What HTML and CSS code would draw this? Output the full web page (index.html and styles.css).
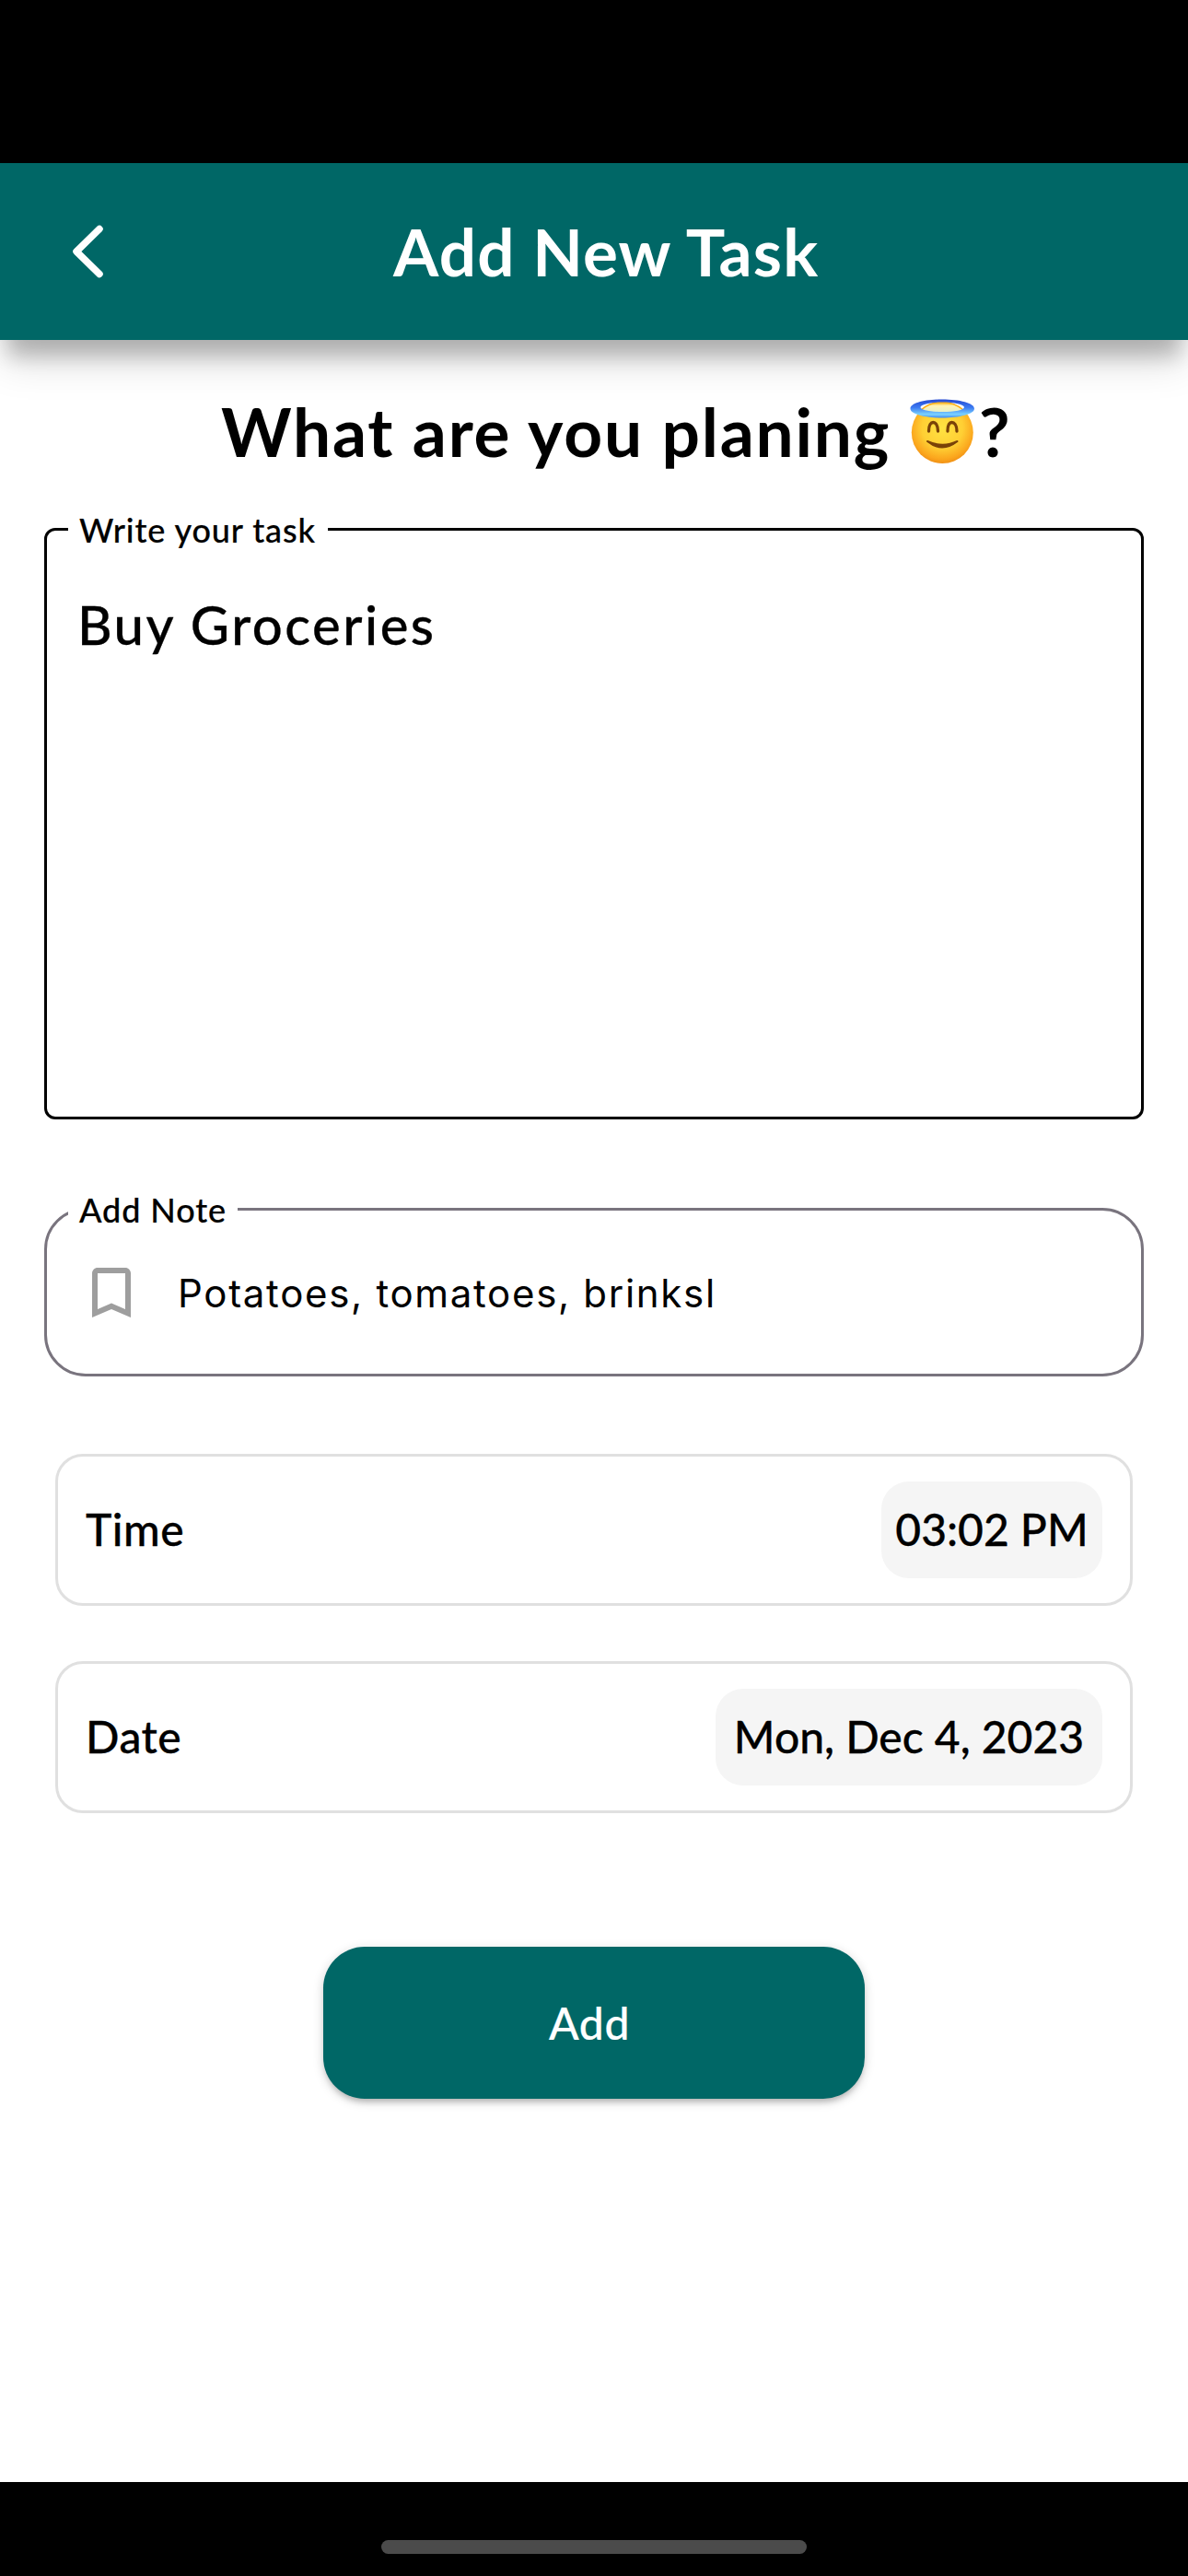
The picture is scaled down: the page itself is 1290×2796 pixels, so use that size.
FILE: index.html
```html
<!DOCTYPE html>
<html lang="en">
<head>
<meta charset="utf-8">
<title>Add New Task</title>
<link rel="stylesheet" href="styles.css">
</head>
<body>
<div class="screen">
  <header class="appbar">
    <svg class="back" width="40" height="64" viewBox="0 0 40 64" aria-label="Back"><path d="M33 7.500L8 32L33 56.500" fill="none" stroke="#fff" stroke-width="7.500" stroke-linecap="round" stroke-linejoin="round"/></svg>
    <h1 class="title">Add New Task</h1>
  </header>
  <main class="content">
    <h2 class="question">
      <span class="question-text">What are you planing</span>
      <svg class="emoji" width="72" height="72" viewBox="0 0 72 72" role="img" aria-label="Smiling face with halo">
        <defs>
          <radialGradient id="face" cx=".5" cy=".42" r=".6"><stop offset="0" stop-color="#ffe342"/><stop offset=".55" stop-color="#ffcf34"/><stop offset=".85" stop-color="#fba61d"/><stop offset="1" stop-color="#ee8b13"/></radialGradient>
          <linearGradient id="crown" x1="0" y1="0" x2="0" y2="1"><stop offset="0" stop-color="#ffad0a"/><stop offset=".3" stop-color="#fff3b5"/><stop offset="1" stop-color="#dcefcf"/></linearGradient>
          <linearGradient id="halo" x1="0" y1="0" x2="0" y2="1"><stop offset="0" stop-color="#2449d2"/><stop offset=".45" stop-color="#3d7bf2"/><stop offset=".82" stop-color="#7cd4ff"/><stop offset="1" stop-color="#3f86ed"/></linearGradient>
        </defs>
        <circle cx="36.300" cy="37.500" r="33.500" fill="url(#face)"/>
        <path d="M13 13Q23 4.500 36 4.500T59 13L52 18H20Z" fill="url(#crown)" stroke="#ffad12" stroke-width="1.500"/>
        <path fill-rule="evenodd" d="M1.500 11.500C1.500 5.500 17 1.500 36 1.500S71 5.500 71 11.500S55 21.500 36 21.500S1.500 17.500 1.500 11.500ZM12.500 10C12.500 13 22 15 36 15S60 13 60 10S49 4.500 36 4.500S12.500 7 12.500 10Z" fill="url(#halo)"/>
        <path d="M21.500 36C21.500 29 24 26.500 26.300 26.500S31.500 29 31.500 36M42 36C42 29 44 26.500 46.500 26.500S52 29 52 36" fill="none" stroke="#7a4208" stroke-width="3.300" stroke-linecap="round"/>
        <path d="M20 47Q36 60 52.500 47Q37 54.500 20 47Z" fill="#7a4208" stroke="#7a4208" stroke-width="2" stroke-linejoin="round"/>
      </svg>
      <span class="question-mark">?</span>
    </h2>
    <fieldset class="field task-field">
      <legend class="label label-task">Write your task</legend>
      <p class="task-value">Buy Groceries</p>
    </fieldset>
    <fieldset class="field note-field">
      <legend class="label label-note">Add Note</legend>
      <div class="note-row">
        <svg class="bookmark" width="72" height="72" viewBox="0 0 24 24"><path fill="#9e9e9e" d="M17 3H7c-1.100 0-1.990.9-1.990 2L5 21l7-3 7 3V5c0-1.100-.9-2-2-2zm0 15l-5-2.180L7 18V5h10v13z"/></svg>
        <span class="note-value">Potatoes, tomatoes, brinksl</span>
      </div>
    </fieldset>
    <section class="picker">
      <span class="picker-name">Time</span>
      <span class="pill pill-time">03:02 PM</span>
    </section>
    <section class="picker">
      <span class="picker-name">Date</span>
      <span class="pill pill-date">Mon, Dec 4, 2023</span>
    </section>
    <button class="add" type="button">Add</button>
  </main>
  <footer class="homebar"><span class="handle"></span></footer>
</div>
</body>
</html>
```
FILE: styles.css
```css
* { box-sizing: border-box; margin: 0; padding: 0; }
body { background: #fff; color: #000; font-family: Lato, "Open Sans", sans-serif; }
.screen { width: 1290px; height: 2796px; padding-top: 177px; display: flex; flex-direction: column; overflow: hidden;
  background: linear-gradient(#000 177px, #fff 177px); }
.appbar { height: 192px; flex: none; display: flex; align-items: center; background: #006766; color: #fff; padding-left: 75px;
  box-shadow: 0 26px 20px -9px rgba(0,0,0,.2), 0 24px 42px -3px rgba(0,0,0,.17); }
.back { flex: none; margin-right: 312px; }
.title { font-size: 71px; line-height: 96px; font-weight: 700; letter-spacing: 1.2px; white-space: nowrap; }
.content { flex: 1; padding: 0 48px; display: flex; flex-direction: column; }
.question { display: flex; align-items: center; height: 90px; margin: 54px 0 41px 192px; font-size: 73px; line-height: 90px; font-weight: 700; white-space: nowrap; }
.question-text { width: 747px; letter-spacing: 1.8px; }
.question-mark { margin-left: 4px; }
.emoji { flex: none; }
.field { border: 3px solid #000; border-radius: 12px; padding: 0 23px; min-width: 0; }
.label { height: 41px; padding: 1px 0 0 12px; font-size: 36px; line-height: 41px; font-weight: 500; letter-spacing: .9px; white-space: nowrap; -webkit-text-stroke: .2px currentColor; }
.label-task { width: 282px; }
.label-note { width: 184px; }
.task-field { height: 661px; }
.task-value { font-size: 58px; line-height: 70px; font-weight: 500; letter-spacing: 2.5px; margin: 48px 0 0 10px; white-space: nowrap; -webkit-text-stroke: .3px currentColor; }
.note-field { height: 202px; margin-top: 77px; border-color: #79747e; border-radius: 45px; }
.note-row { display: flex; align-items: center; margin: 34px 0 0 11px; height: 72px; }
.note-value { font: 400 42px/72px Inter, sans-serif; letter-spacing: 1.7px; margin-left: 36px; padding-top: 2px; white-space: nowrap; }
.picker { height: 165px; margin: 84px 12px 0; border: 3px solid #e0e0e0; border-radius: 30px; padding: 0 30px; display: flex; justify-content: space-between; align-items: center; font-size: 48px; line-height: 60px; font-weight: 500; -webkit-text-stroke: .3px currentColor; }
.picker + .picker { margin-top: 60px; }
.picker-name { letter-spacing: .5px; padding-bottom: 1px; }
.pill { height: 105px; padding-bottom: 1px; border-radius: 30px; background: #f5f5f5; display: flex; align-items: center; justify-content: center; white-space: nowrap; }
.pill-time { width: 240px; }
.pill-date { width: 420px; }
.add { width: 588px; height: 165px; margin: 145px 0 0 303px; border: 0; border-radius: 45px; background: #006766; color: #fff; font: 500 48px/60px Lato, sans-serif; letter-spacing: .7px; padding-right: 10px; -webkit-text-stroke: .2px currentColor;
  box-shadow: 0 6px 6px -3px rgba(0,0,0,.2), 0 3px 12px rgba(0,0,0,.18); }
.homebar { height: 102px; flex: none; background: #000; display: flex; justify-content: center; padding-top: 63px; }
.handle { width: 462px; height: 15px; border-radius: 8px; background: #4b4b4b; }
```
